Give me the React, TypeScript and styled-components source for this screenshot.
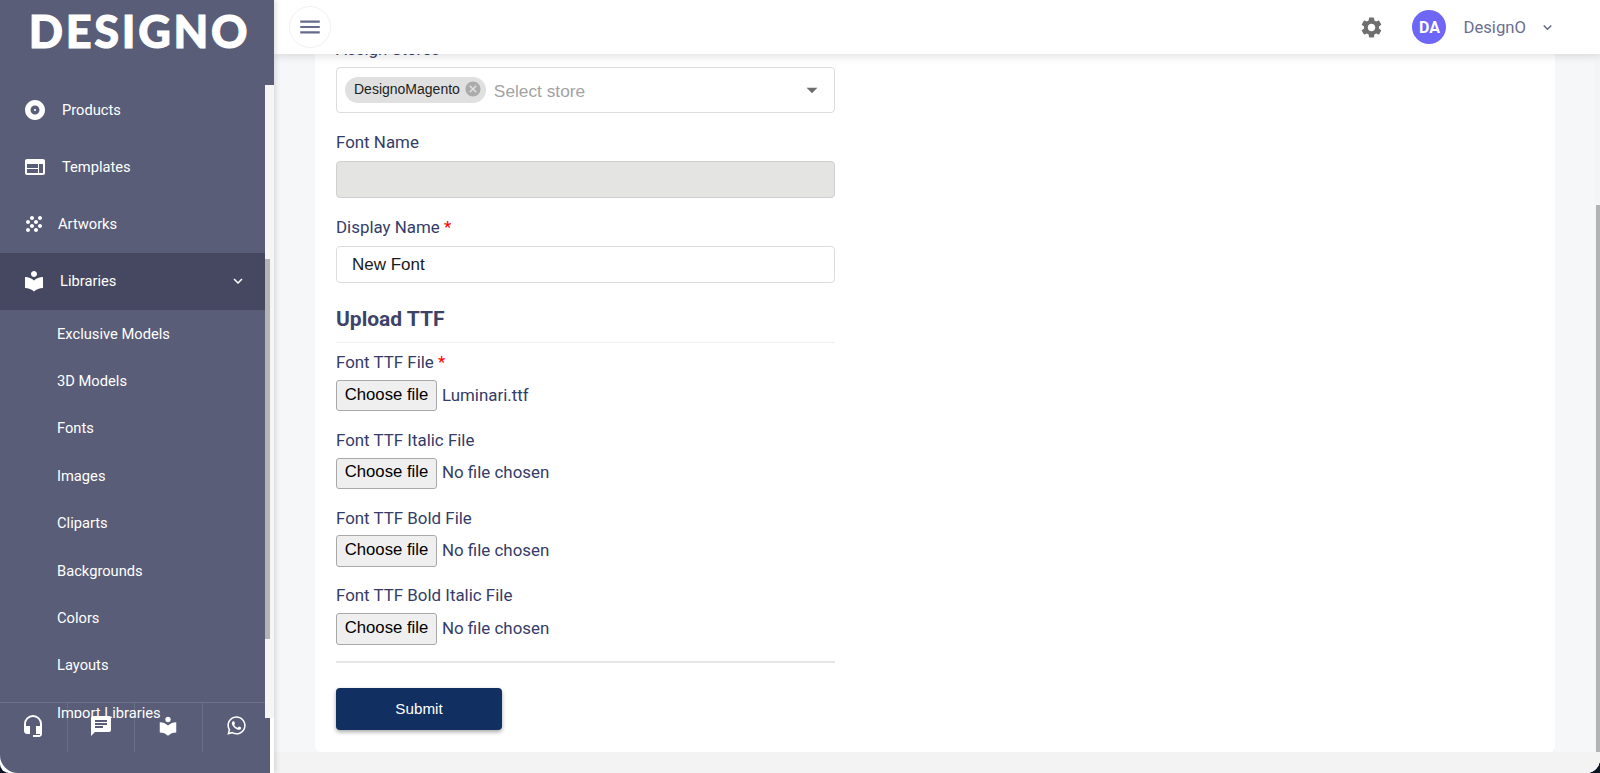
import React from "react";
import styled, { createGlobalStyle } from "styled-components";
import {
  MdAlbum,
  MdArrowDropDown,
  MdCancel,
  MdChat,
  MdExpandMore,
  MdGrain,
  MdHeadsetMic,
  MdLocalLibrary,
  MdMenu,
  MdSettings,
  MdWeb,
} from "react-icons/md";
import { FaWhatsapp } from "react-icons/fa";

const GlobalStyle = createGlobalStyle`
  html, body {
    margin: 0;
    height: 100%;
    overflow: hidden;
    background: #0b1424;
  }
  * {
    box-sizing: border-box;
  }
`;

const subItems = [
  "Exclusive Models",
  "3D Models",
  "Fonts",
  "Images",
  "Cliparts",
  "Backgrounds",
  "Colors",
  "Layouts",
  "Import Libraries",
];

const fileFields = [
  { label: "Font TTF File", required: true, file: "Luminari.ttf" },
  { label: "Font TTF Italic File", required: false, file: "No file chosen" },
  { label: "Font TTF Bold File", required: false, file: "No file chosen" },
  { label: "Font TTF Bold Italic File", required: false, file: "No file chosen" },
];

const App: React.FC = () => {
  return (
    <Shell>
      <GlobalStyle />
      <Sidebar>
        <LogoArea>
          <Logo>DESIGNO</Logo>
        </LogoArea>

        <MenuArea>
          <MenuList>
            <MenuItem $gap={15} $left={23}>
              <MdAlbum size={24} />
              Products
            </MenuItem>
            <MenuItem $gap={15} $left={23}>
              <MdWeb size={24} />
              Templates
            </MenuItem>
            <MenuItem $gap={12} $left={22}>
              <MdGrain size={24} />
              Artworks
            </MenuItem>
            <MenuItem $gap={14} $left={22} $active>
              <MdLocalLibrary size={24} />
              Libraries
              <MenuChevron>
                <MdExpandMore size={18} />
              </MenuChevron>
            </MenuItem>
            {subItems.map((item) => (
              <SubItem key={item}>{item}</SubItem>
            ))}
          </MenuList>
          <SideTrack>
            <SideThumb />
          </SideTrack>
        </MenuArea>

        <SideBottom />

        <SideFooter>
          <FooterCell>
            <MdHeadsetMic size={24} />
          </FooterCell>
          <FooterCell>
            <MdChat size={24} />
          </FooterCell>
          <FooterCell>
            <MdLocalLibrary size={22} />
          </FooterCell>
          <FooterCell>
            <FaWhatsapp size={21} />
          </FooterCell>
        </SideFooter>
      </Sidebar>

      <Main>
        <Header>
          <MenuButton>
            <MdMenu size={26} />
          </MenuButton>
          <HeaderRight>
            <Gear>
              <MdSettings size={25} />
            </Gear>
            <Avatar>DA</Avatar>
            <UserName>DesignO</UserName>
            <UserChevron>
              <MdExpandMore size={17} />
            </UserChevron>
          </HeaderRight>
        </Header>

        <Content>
          <ScrollArea>
            <Card>
              <Form>
                <Field>
                  <Label>Assign Stores</Label>
                  <SelectBox>
                    <Chip>
                      DesignoMagento
                      <ChipClose>
                        <MdCancel size={18} />
                      </ChipClose>
                    </Chip>
                    <Placeholder>Select store</Placeholder>
                    <SelectArrow>
                      <MdArrowDropDown size={26} />
                    </SelectArrow>
                  </SelectBox>
                </Field>

                <Field>
                  <Label>Font Name</Label>
                  <TextInput disabled />
                </Field>

                <Field>
                  <Label>
                    Display Name <Required>*</Required>
                  </Label>
                  <TextInput defaultValue="New Font" />
                </Field>

                <SectionTitle>Upload TTF</SectionTitle>
                <SectionRule />

                {fileFields.map((field) => (
                  <FileField key={field.label}>
                    <FileLabel>
                      {field.label} {field.required && <Required>*</Required>}
                    </FileLabel>
                    <FileRow>
                      <FileButton type="button">Choose file</FileButton>
                      <FileName>{field.file}</FileName>
                    </FileRow>
                  </FileField>
                ))}

                <FormRule />
                <SubmitButton type="button">Submit</SubmitButton>
              </Form>
            </Card>
          </ScrollArea>
          <PageTrack>
            <PageThumb />
          </PageTrack>
        </Content>
        <PageFooter />
      </Main>
    </Shell>
  );
};

export default App;

const Shell = styled.div`
  display: flex;
  width: 1600px;
  height: 773px;
  overflow: hidden;
  background: #ffffff;
  border-radius: 0 0 14px 9px;
  font-family: Roboto, "Liberation Sans", sans-serif;
`;

const Sidebar = styled.aside`
  position: relative;
  z-index: 2;
  display: flex;
  flex-direction: column;
  flex: none;
  width: 274px;
  box-shadow: 2px 0 5px rgba(0, 0, 0, 0.12);
`;

const LogoArea = styled.div`
  flex: none;
  height: 85px;
  padding: 4px 0 0 5px;
  background: #595d78;
  text-align: center;
`;

const Logo = styled.div`
  font-family: Lato, "Open Sans", sans-serif;
  font-size: 45px;
  font-weight: 900;
  line-height: 54px;
  letter-spacing: 2.7px;
  color: #ffffff;
  -webkit-text-stroke: 1px #ffffff;
`;

const MenuArea = styled.div`
  display: flex;
  flex: none;
  height: 633px;
`;

const MenuList = styled.nav`
  flex: 1;
  min-width: 0;
  overflow: hidden;
  background: #595d78;
`;

const MenuItem = styled.div<{ $gap: number; $left: number; $active?: boolean }>`
  display: flex;
  align-items: center;
  gap: ${({ $gap }) => $gap}px;
  height: 57px;
  padding-bottom: 2px;
  padding-left: ${({ $left }) => $left}px;
  font-size: 14.7px;
  font-weight: 400;
  color: #ffffff;
  background: ${({ $active }) => ($active ? "#454860" : "transparent")};

  &:first-child {
    margin-top: -3px;
  }
`;

const MenuChevron = styled.span`
  display: flex;
  margin-left: auto;
  margin-right: 18px;
`;

const SubItem = styled.div`
  display: flex;
  align-items: center;
  height: 47.4px;
  padding-left: 57px;
  font-size: 14.7px;
  font-weight: 400;
  color: #ffffff;
`;

const SideTrack = styled.div`
  flex: none;
  width: 9px;
  background: #f5f5f5;
`;

const SideThumb = styled.div`
  width: 5px;
  height: 380px;
  margin-top: 174px;
  background: #b4b4b4;
`;

const SideBottom = styled.div`
  flex: 1;
  width: 270px;
  background: #595d78;
  border-bottom-left-radius: 18px;
`;

const SideFooter = styled.div`
  position: absolute;
  top: 702px;
  left: 0;
  display: grid;
  grid-template-columns: repeat(4, 1fr);
  width: 270px;
  height: 50px;
  border-top: 1px solid rgba(255, 255, 255, 0.13);
`;

const FooterCell = styled.div`
  display: flex;
  align-items: center;
  justify-content: center;
  padding-bottom: 4px;
  color: #ffffff;
  border-right: 1px solid rgba(255, 255, 255, 0.1);

  &:last-child {
    border-right: 0;
  }
`;

const Main = styled.main`
  display: flex;
  flex-direction: column;
  flex: 1;
  min-width: 0;
  background: #f6f7f9;
`;

const Header = styled.header`
  position: relative;
  z-index: 1;
  display: flex;
  align-items: center;
  flex: none;
  height: 54px;
  padding-left: 15px;
  background: #ffffff;
  box-shadow: 0 2px 9px rgba(0, 0, 0, 0.13);
`;

const MenuButton = styled.div`
  display: flex;
  align-items: center;
  justify-content: center;
  width: 42px;
  height: 42px;
  color: #666b8c;
  border: 1px solid #f1f1f1;
  border-radius: 50%;
`;

const HeaderRight = styled.div`
  display: flex;
  align-items: center;
  margin-left: auto;
  padding-right: 44px;
`;

const Gear = styled.span`
  display: flex;
  margin-right: 28px;
  color: #6f6f6f;
`;

const Avatar = styled.div`
  display: flex;
  align-items: center;
  justify-content: center;
  width: 34px;
  height: 34px;
  font-size: 16px;
  font-weight: 700;
  color: #ffffff;
  background: #6d66f6;
  border-radius: 50%;
`;

const UserName = styled.span`
  margin-left: 17px;
  font-size: 16.7px;
  color: #6b7090;
`;

const UserChevron = styled.span`
  display: flex;
  margin-left: 13px;
  color: #5f6488;
`;

const Content = styled.div`
  display: flex;
  flex: 1;
  min-height: 0;
  overflow: hidden;
`;

const ScrollArea = styled.div`
  flex: 1;
  min-width: 0;
  padding: 0 40px 0 41px;
`;

const PageTrack = styled.div`
  flex: none;
  width: 5px;
  background: #f4f5f7;
`;

const PageThumb = styled.div`
  width: 4px;
  height: 547px;
  margin-top: 151px;
  margin-left: 1px;
  background: #b4b4b4;
`;

const Card = styled.section`
  margin-top: -37px;
  padding: 19.6px 21px 21.3px;
  background: #ffffff;
  border-radius: 0 0 6px 6px;
`;

const Form = styled.form`
  width: 499px;
`;

const Field = styled.div`
  margin-bottom: 17px;
`;

const Label = styled.label`
  display: block;
  margin-bottom: 6.4px;
  font-size: 16.9px;
  line-height: 24px;
  color: #353c68;
`;

const FileLabel = styled(Label)`
  margin-bottom: 5.7px;
`;

const Required = styled.span`
  color: #f00;
`;

const SelectBox = styled.div`
  display: flex;
  align-items: center;
  height: 46.5px;
  padding: 0 9px 0 8px;
  background: #ffffff;
  border: 1px solid #dcdcdc;
  border-radius: 4px;
`;

const Chip = styled.div`
  display: flex;
  align-items: center;
  gap: 4px;
  height: 26px;
  padding: 0 4px 2px 9px;
  font-family: "Liberation Sans", sans-serif;
  font-size: 14px;
  color: #222222;
  background: #e0e0e0;
  border-radius: 13px;
`;

const ChipClose = styled.span`
  display: flex;
  color: #ababab;
`;

const Placeholder = styled.span`
  margin-left: 8px;
  padding-top: 2px;
  font-family: "Liberation Sans", sans-serif;
  font-size: 17.3px;
  color: #a3a3a3;
`;

const SelectArrow = styled.span`
  display: flex;
  margin-left: auto;
  color: #6e6e6e;
`;

const TextInput = styled.input`
  display: block;
  width: 100%;
  height: 37.3px;
  padding: 2px 15px 0;
  font-family: "Liberation Sans", sans-serif;
  font-size: 17px;
  color: #1a1a1a;
  background: #ffffff;
  border: 1px solid #dcdcdc;
  border-radius: 4px;
  outline: none;

  &:disabled {
    background: #e4e4e3;
    border-color: #cfcfcf;
  }
`;

const SectionTitle = styled.h3`
  margin: 22px 0 8.7px;
  font-size: 21px;
  font-weight: 700;
  line-height: 28px;
  color: #3d4366;
`;

const SectionRule = styled.hr`
  height: 1px;
  margin: 0 0 7.6px;
  background: #f0f0f0;
  border: 0;
`;

const FileField = styled.div`
  margin-bottom: 16.6px;
`;

const FileRow = styled.div`
  display: flex;
  align-items: center;
  gap: 5px;
`;

const FileButton = styled.button`
  width: 101px;
  height: 31.5px;
  padding: 0 0 2px;
  font-family: "Liberation Sans", sans-serif;
  font-size: 16.7px;
  color: #000000;
  background: #efefef;
  border: 1px solid #a9a9a9;
  border-radius: 3px;
`;

const FileName = styled.span`
  padding-bottom: 2px;
  font-size: 16.9px;
  color: #353c68;
`;

const FormRule = styled.hr`
  height: 1.5px;
  margin: 0 0 25.3px;
  background: #e6e6e6;
  border: 0;
`;

const SubmitButton = styled.button`
  display: block;
  width: 166px;
  height: 42.4px;
  padding: 0 0 2px;
  font-family: "Liberation Sans", sans-serif;
  font-size: 15.2px;
  font-weight: 500;
  color: #ffffff;
  background: #113061;
  border: 0;
  border-radius: 4px;
  box-shadow: 0 2px 4px rgba(0, 0, 0, 0.35);
`;

const PageFooter = styled.div`
  flex: none;
  height: 21px;
  background: #f3f3f3;
`;
